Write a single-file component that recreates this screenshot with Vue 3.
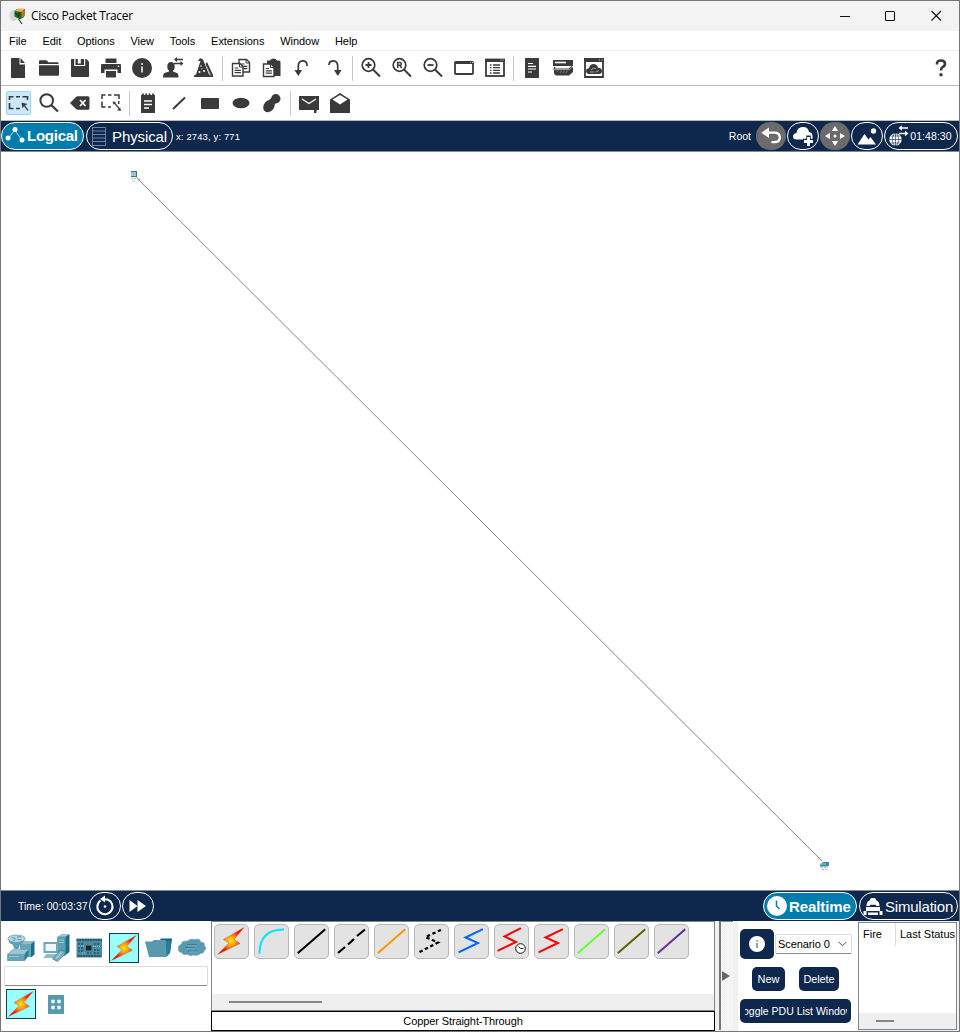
<script setup>
const D = '#3a3a3a'
const menus = ['File', 'Edit', 'Options', 'View', 'Tools', 'Extensions', 'Window', 'Help']

const magnifier = `<circle cx="8.5" cy="8" r="6.3" fill="none" stroke="${D}" stroke-width="1.7"/><path d="M13 12.5L20 19.5" stroke="${D}" stroke-width="2"/>`
const sheet = (x, y) => `<path d="M${x} ${y}h7.5l3 3v9.500h-10.500z" fill="#fff" stroke="${D}" stroke-width="1.4"/><path d="M${x + 7} ${y}v3.500h3.500" fill="none" stroke="${D}"/><path d="M${x + 2.2} ${y + 4.500}h3.500M${x + 2.2} ${y + 6.800}h6.200M${x + 2.2} ${y + 9.200}h6.200" stroke="${D}" stroke-width="1.200"/>`

const icons = {
  file: `<path d="M4 1h8.500v6.500H18V21H4z" fill="${D}"/><path d="M13.500 1L18 6h-4.500z" fill="${D}"/>`,
  folder: `<path d="M1 4q0-.8.8-.8h6.400q.8 0 1.200.8l.8 1.300h9.500q.8 0 .8.8v1H1z" fill="${D}"/><path d="M1 8.300h20v9.500q0 1-1 1H2q-1 0-1-1z" fill="${D}"/>`,
  save: `<path d="M2.500 2h2.700v7h11V2h1L20 4.800V19q0 1-1 1H3q-1 0-1-1V2.500z" fill="${D}"/><path d="M6.500 2h2.300v4.500h3V2h3.200v6H6.500z" fill="${D}"/>`,
  print: `<path d="M5.500 1.500h11V6h-11z" fill="${D}"/><path d="M1 8q0-1 1-1h18q1 0 1 1v8h-3.500v-3.500h-13V16H1z" fill="${D}"/><path d="M6 14h10v6.500H6z" fill="${D}"/><circle cx="18.500" cy="9.300" r=".8" fill="#fff"/>`,
  info: `<circle cx="11" cy="11" r="10" fill="${D}"/><path d="M11 9.500v6" stroke="#ddd" stroke-width="1.800"/><circle cx="11" cy="7" r="1.100" fill="#ddd"/>`,
  user: `<ellipse cx="9" cy="9.500" rx="3.700" ry="4.500" fill="${D}"/><path d="M7 12h4v2.500l4 1.500q1.500.7 1.500 4.500H1q0-3.800 1.500-4.500l4.500-1.500z" fill="${D}"/><path d="M13 2.500h8M12 6.500h7" stroke="${D}" stroke-width="1.500"/><path d="M15 0v5l-3-2.500zM18.500 4v5l3-2.500z" fill="${D}"/>`,
  wizard: `<path d="M7 1l3 1.500L16 17.500l2 1V20H1v-1.500l2-1L7.500 4 5 4z" fill="${D}"/><path d="M12.500 7l1.500-2L20 18v2h-2z" fill="${D}"/><g fill="#fff"><circle cx="8" cy="9" r=".8"/><circle cx="6.500" cy="15" r="1"/><circle cx="11" cy="14" r="1"/><circle cx="9" cy="11.800" r=".6"/></g><path d="M14 10l4 9" stroke="#aaa" stroke-width=".7"/>`,
  copy: sheet(9, 2.500) + sheet(2.500, 6.500),
  paste: `<path d="M6 3.500h3q1-2 3.500-2T16 3.500h2q1.500 0 1.500 1.500v14H6z" fill="${D}"/>${sheet(2.500, 7)}`,
  undo: `<path d="M6.300 15V9.500Q6.300 3.800 10.500 3.800T15 7.500v1.500" fill="none" stroke="${D}" stroke-width="1.700"/><path d="M2.500 13h7.600l-3.800 6z" fill="${D}"/>`,
  redo: `<path d="M14.700 15V9.500Q14.700 3.800 10.500 3.800T6 7.500v.500" fill="none" stroke="${D}" stroke-width="1.700"/><path d="M11 13h7.600l-3.800 6z" fill="${D}"/>`,
  zoomIn: `${magnifier}<path d="M8.500 5v6M5.500 8h6" stroke="${D}" stroke-width="1.800"/>`,
  zoomReset: `${magnifier}<path d="M6.700 11V5.500h2q1.700 0 1.700 1.400T8.700 8.300H6.700M8.800 8.300L10.700 11" fill="none" stroke="${D}" stroke-width="1.500"/>`,
  zoomOut: `${magnifier}<path d="M5.500 8h6" stroke="${D}" stroke-width="1.800"/>`,
  viewport: `<rect x="2" y="5" width="18" height="12" rx=".8" fill="#fff" stroke="${D}" stroke-width="1.800"/><path d="M2 5.800h18" stroke="${D}" stroke-width="2.400"/><path d="M17 5.500h1M19 5.500h1" stroke="#bbb" stroke-width="1"/>`,
  listwin: `<rect x="2" y="2.500" width="18" height="16.500" fill="#fff" stroke="${D}" stroke-width="1.800"/><path d="M1 3.500h20" stroke="${D}" stroke-width="3"/><path d="M6 8h1.500M9 8h7M6 10.700h1.500M9 10.700h7M6 13.400h1.500M9 13.400h7M6 16h1.500M9 16h7" stroke="${D}" stroke-width="1.300"/><path d="M16.500 3h1M18.500 3h1" stroke="#ccc" stroke-width="1"/>`,
  log: `<path d="M4 1h14v20H4z" fill="${D}"/><path d="M7 6.500h5M7 9.300h8M7 12h8M7 15h4" stroke="#fff" stroke-width="1.200"/>`,
  stack: `<path d="M1 3h20v6H1z" fill="${D}"/><path d="M3 5.500h11" stroke="#fff" stroke-width="1.600"/><path d="M3 10l-1 2h15l3-2.500" fill="none" stroke="${D}" stroke-width="1.200"/><path d="M2 13h15l4-3v5l-4 3.500H4.500Q2 18 2 16z" fill="${D}"/><path d="M5 15l1-1.500M8 16l1.500-2.500M11 16l1.500-2.500M14 16l1.500-2.500" stroke="#999" stroke-width=".7"/>`,
  cloudwin: `<path d="M2 2h18v18H2z" fill="#fff" stroke="${D}" stroke-width="1.800"/><path d="M1 1h20v4H1z" fill="${D}"/><path d="M16 3h1M18.500 3h1" stroke="#ccc"/><path d="M5.500 17Q3 16.500 3 14t3-2.800Q7 7 10.500 7t4.500 3.700q4 .3 4 3.300T16 17z" fill="${D}"/><path d="M8 13q2-3 5-1.500M7 15h4M12.500 15q2.500 0 3-2" fill="none" stroke="#aaa" stroke-width="1"/>`,
  select: `<path d="M2.500 8V4.700h4M9 4.700h4M15.500 4.700h5V8M2.500 11v5.500h4M9 16.500h4" fill="none" stroke="${D}" stroke-width="1.600"/><path d="M14.500 10.500l6 1.500-2.500 1.500 3.500 4.500-1 .8-3.500-4.500-1.500 2z" fill="${D}"/>`,
  find: `<circle cx="8.700" cy="8.500" r="6.300" fill="none" stroke="${D}" stroke-width="2"/><path d="M13.200 13L20 19.500" stroke="${D}" stroke-width="2.300"/>`,
  del: `<path d="M1 11l6-6q.7-.8 2-.8h10q1.500 0 1.500 1.500v10.500q0 1.500-1.500 1.500H9q-1.300 0-2-.8z" fill="${D}"/><path d="M11 8l5.500 6M16.500 8L11 14" stroke="#fff" stroke-width="1.800"/>`,
  resize: `<path d="M2 7V3h3.500M8 3h3.500M14 3h5v4M2 9.500v5.500h3.500M8 15h3M18.700 9v3" fill="none" stroke="${D}" stroke-width="1.500"/><path d="M14 10.500l6 7" stroke="${D}" stroke-width="1.200"/><path d="M12.500 9.500l3.500.5-2.500 2.500zM21 19l-4-.8 3.200-2.800z" fill="${D}"/>`,
  note: `<path d="M4 3h14v18H4z" fill="${D}"/><path d="M6 1.500v3M9.200 1.500v3M12.500 1.500v3M16 1.500v3" stroke="${D}" stroke-width="1.800"/><path d="M7 9h8M7 12.500h8M7 16h5" stroke="#fff" stroke-width="1.400"/>`,
  line: `<path d="M5 17L17 5.500" stroke="${D}" stroke-width="2"/>`,
  rect: `<rect x="2" y="6" width="18" height="11" rx="1" fill="${D}"/>`,
  ellipse: `<ellipse cx="11" cy="11" rx="8.500" ry="5.200" fill="${D}"/>`,
  blob: `<ellipse cx="8" cy="14" rx="5.200" ry="6.700" transform="rotate(38 8 14)" fill="${D}"/><circle cx="14.800" cy="6.700" r="4.700" fill="${D}"/><path d="M8 8l6 4 3-3-4-5z" fill="${D}"/>`,
  mail: `<path d="M1 4h20v14h-2.500v3h-2.500v-3H1z" fill="${D}"/><path d="M4 7l7 4.500L18 7" fill="none" stroke="#fff" stroke-width="1.300"/>`,
  openmail: `<path d="M1 7.500L11 1l10 6.500V21H1z" fill="${D}"/><path d="M11 3l7.500 4.500-7.500 5-7.500-5z" fill="#fff"/>`,
}
const rowOne = ['file', 'folder', 'save', 'print', 'info', 'user', 'wizard', '|', 'copy', 'paste', 'undo', 'redo', '|', 'zoomIn', 'zoomReset', 'zoomOut', 'viewport', 'listwin', '|', 'log', 'stack', 'cloudwin']
const rowTwo = ['select', 'find', 'del', 'resize', '|', 'note', 'line', 'rect', 'ellipse', 'blob', '|', 'mail', 'openmail']

const bolt = (id) => `<defs><radialGradient id="${id}" cx=".5" cy=".5" r=".55"><stop offset="0" stop-color="#ffe800"/><stop offset=".35" stop-color="#ff9a10"/><stop offset=".7" stop-color="#ff2008"/><stop offset="1" stop-color="#f00"/></radialGradient></defs><path d="M28 1.500L7.500 13.500l5.500 3.500L1.500 28.500 24 17.500l-6-4z" fill="url(#${id})" stroke="#b5521c" stroke-width=".4"/>`

const devices = {
  router: `<path d="M14 11l3-3h11.500v13.500l-3 2.500H14z" fill="#176f8c"/><path d="M14 11h11v13H14z" fill="#68a4b8"/><path d="M14 11l3-3h11.500l-3.500 3z" fill="#8fbccb"/><path d="M2.500 6.500q0 4 4 5L8.500 16h4l1.500-4.500q4-1 4-5z" fill="#5f9fb4"/><ellipse cx="10.500" cy="5.700" rx="8.700" ry="3.700" fill="#b4d3dc" stroke="#5b9eb4" stroke-width=".7"/><path d="M5.500 4.500l4 1M11 4l4-.5M7 8l2.500-1.500M11.500 6l4 1" stroke="#4f93a9" stroke-width=".9"/><path d="M1.500 21l5-4.500h16v6.500L18.500 28h-17z" fill="#2b7c97"/><path d="M1.500 21h17v7h-17z" fill="#68a4b8"/><path d="M1.500 21l5-4.500h16L18.500 21z" fill="#9bc5d2"/><path d="M3.500 23.500h9" stroke="#cfe3e9" stroke-dasharray="1 1"/>`,
  pc: `<path d="M17.500 4l4-2.500h8V19l-5 4h-7z" fill="#176f8c"/><path d="M17.500 3.800h8V23h-8z" fill="#5e9eb4"/><path d="M17.500 3.800l4-2.500h8l-4 2.500z" fill="#9bc5d2"/><path d="M19 7h5M19 9.500h5" stroke="#acd0da" stroke-width=".8"/><path d="M3.500 9h14v11h-14z" fill="#6ba6b9"/><path d="M5.500 11h10.500v7H5.500z" fill="#f0f6f7"/><path d="M3 25l3.500-4H17l-3 4z" fill="#8fbccb"/><path d="M12.500 26l8-9 4.500 1.500V21l-7.500 7.500z" fill="#77aec0" stroke="#2a7891" stroke-width=".6"/><path d="M16.500 25l5-5.500" stroke="#d8e9ee" stroke-width="1.400" stroke-dasharray="1 1"/>`,
  board: `<path d="M2.500 5.500h25.500v19H2.500z" fill="#4a8ba2"/><path d="M2.500 7h25.500M3.500 23h23" stroke="#1b4656" stroke-width="1.300" stroke-dasharray="2 .7"/><path d="M12 12.500h5.500v5H12z" fill="#20262a"/><path d="M4 11h5M20 11h6M4 15h5M4 18h6M20 17h6M20 20h5M13 20h4" stroke="#235566" stroke-width="1.500" stroke-dasharray="2 1"/><path d="M5 13h5M19 13.500h7M8 20h4" stroke="#b3d0d9" stroke-width=".9" stroke-dasharray="1 1"/>`,
  folder: `<path d="M17 7l1-1.500h11L27 20l-4 4z" fill="#0b6886"/><path d="M2 8.500h7l2-1.500h12l1 17H6z" fill="#5999b0"/><path d="M23 8l1 15 3-3.500 1.500-12z" fill="#2b7c97"/>`,
  cloud: `<path d="M4.500 11q0-3.500 6-3 3-3 7-1.500 6-1.500 6 2.500 5 0 4 4 3 2 0 4.500-1 3.500-4 3-3 3-7 1.500-3 1.500-6-.5-5 1-6-2-4-.5-3-4-1-3 3-4.500z" fill="#5999b0" stroke="#7eb0c1" stroke-width=".6"/><path d="M10 11.500h10M8 14.500h10M11 18h10" stroke="#347d97" stroke-width="1"/><path d="M11 12.700h9M9 15.700h9M12 19h9" stroke="#8fbccb" stroke-width=".7"/>`,
}
const categories = ['router', 'pc', 'board', 'bolt', 'folder', 'cloud']

const stroke = (d, c, extra = '') => `<path d="${d}" fill="none" stroke="${c}" stroke-width="2" stroke-linecap="square" ${extra}/>`
const zig = 'M5.500 28L24 19 11.500 13.500 28 5.500'
const cables = [
  `<g transform="translate(2 2)">${bolt('cable')}</g>`,
  stroke('M5.500 28.500Q6 6 29 5.500', '#00e5ff'),
  stroke('M4.500 28.500L30.500 6', '#000'),
  `<path d="M4 29L11 23M14 20.500L20 15M23 12L31 5.500" stroke="#000" stroke-width="2.200"/>`,
  stroke('M4.500 28.500L30.500 6', '#ff9800'),
  `<path d="M5.500 28L24 18.500 11.500 13 29 5" fill="none" stroke="#000" stroke-width="2.200" stroke-dasharray="3.500 2.500"/>`,
  stroke(zig, '#0066ff'),
  stroke('M4.500 26.500L22 18 10.500 12.500 26 4.500', '#f00') + `<circle cx="26.500" cy="24.500" r="4.800" fill="#fff" stroke="#111" stroke-width="1"/><path d="M24.500 22.500l2 2h3" fill="none" stroke="#111" stroke-width=".9"/>`,
  stroke(zig, '#f00'),
  stroke('M4.500 28.500L30.500 6', '#66ff33'),
  stroke('M4.500 28.500L30.500 6', '#666000'),
  stroke('M4.500 28.500L30.500 6', '#663399'),
]
</script>

<template>
  <div class="window">
    <header class="title">
      <svg class="app-icon" width="18" height="18" viewBox="0 0 18 18">
        <ellipse cx="5" cy="8.500" rx="4.500" ry="5.500" fill="#d0d8d6" />
        <path d="M5.500 4L8 2h8l-1 8-4 2.500-5.500-3z" fill="#1b6a25" />
        <path d="M6 4l3-2.500h7L13 5z" fill="#e8b15a" />
        <path d="M12.500 5L16 2v6.500l-3.500 2.500z" fill="#a87a2e" />
        <path d="M6 6l4 3.500M10 5.500v5" fill="none" stroke="#0c2d10" stroke-width=".9" />
        <path d="M9.500 12L13 17" stroke="#444" stroke-width="1.300" />
      </svg>
      <span class="name">Cisco Packet Tracer</span>
      <svg class="controls" width="104" height="12" viewBox="0 0 104 12" fill="none" stroke="#111" stroke-width="1.100">
        <path d="M0 6.500h10M91.500 1l9.500 9.500M101 1l-9.500 9.500" /><rect x="45.500" y="1.500" width="9" height="9" rx="1" />
      </svg>
    </header>

    <nav class="menu"><span v-for="m in menus" :key="m">{{ m }}</span></nav>

    <div class="toolbar">
      <template v-for="(n, i) in rowOne" :key="i">
        <i v-if="n === '|'" class="sep"></i>
        <span v-else class="tool"><svg width="22" height="22" viewBox="0 0 22 22" v-html="icons[n]" /></span>
      </template>
      <svg class="help" width="12" height="20" viewBox="0 0 12 20"><path d="M2 6.500V5.500Q2 2.500 6 2.500t4 3.300Q10 8 7.500 9.200 6 10 6 12.500" fill="none" stroke="#3a3a3a" stroke-width="2.600" /><circle cx="6" cy="16.800" r="1.700" fill="#3a3a3a" /></svg>
    </div>
    <div class="toolbar">
      <template v-for="(n, i) in rowTwo" :key="i">
        <i v-if="n === '|'" class="sep"></i>
        <span v-else class="tool" :class="{ active: n === 'select' }"><svg width="22" height="22" viewBox="0 0 22 22" v-html="icons[n]" /></span>
      </template>
    </div>

    <div class="bar top">
      <button class="pill on logical">
        <svg width="21" height="20" viewBox="0 0 21 20"><path d="M3.500 13.500L9.500 5l7 9.500" fill="none" stroke="#d5eaf3" stroke-width=".8" /><g fill="#fff"><circle cx="3" cy="13" r="2.500" /><circle cx="10" cy="4.500" r="2.500" /><circle cx="17" cy="15" r="2.500" /></g></svg>
        <b>Logical</b>
      </button>
      <button class="pill physical">
        <svg width="14" height="19" viewBox="0 0 14 19"><path d="M.5.5h13v18H.5zM.5 4h13M.5 7.500h13M.5 11h13M.5 14.500h13" fill="none" stroke="#71829f" stroke-width="1" /></svg>
        <span>Physical</span>
      </button>
      <span class="coords">x: 2743, y: 771</span>
      <span class="root">Root</span>
      <span class="round grey">
        <svg width="22" height="20" viewBox="0 0 22 20"><path d="M8 6.700h6q5.800 0 5.800 4.700t-5.800 4.700h-2.500" fill="none" stroke="#fff" stroke-width="2.300" /><path d="M9 1.500v10.400L1.300 6.700z" fill="#fff" /></svg>
      </span>
      <span class="round wide">
        <svg width="22" height="22" viewBox="0 0 22 22"><path d="M4.500 14.500Q1 14.500 1 11.500t3.500-3.500Q5 2.500 10.500 2t6.500 5q3.500.5 3.500 4v3.500z" fill="#fff" /><path d="M16.500 10.500v11M11 16h11" stroke="#0d274d" stroke-width="4.500" /><path d="M16.500 12v9M12 16.500h9" stroke="#fff" stroke-width="2.800" /></svg>
      </span>
      <span class="round grey">
        <svg width="20" height="20" viewBox="0 0 20 20" fill="#fff"><path d="M10 0l3.200 5H6.800zM10 20l3.200-5H6.800zM0 10l5-3v6zM20 10l-5-3v6z" /><circle cx="10" cy="10" r="1.500" /></svg>
      </span>
      <span class="round wide">
        <svg width="20" height="18" viewBox="0 0 20 18" fill="#fff"><path d="M.5 17.500L7.500 7l4 5.500 2-2.500 5.500 7.500z" /><circle cx="16.500" cy="4" r="2.700" /></svg>
      </span>
      <span class="round clock">
        <svg width="21" height="22" viewBox="0 0 21 22"><circle cx="7.500" cy="14.500" r="6.200" fill="#fff" /><path d="M1 14.500h13M2.500 11h10M2.500 18h10M7.500 8v13" stroke="#0d274d" stroke-width=".6" /><ellipse cx="7.500" cy="14.500" rx="3" ry="6.200" fill="none" stroke="#0d274d" stroke-width=".6" /><path d="M13 3h7M11 8.500h7" stroke="#fff" stroke-width="1.500" /><path d="M14 .3v5.400L10.500 3zM17 5.800v5.400L20.500 8.500z" fill="#fff" /></svg>
        <span>01:48:30</span>
      </span>
    </div>

    <main class="workspace">
      <svg width="958" height="738" viewBox="1 152 958 738">
        <path d="M136.500 177.500L822 861" stroke="#858585" stroke-width="1" />
        <path d="M131 171h6v6h-6z" fill="#2b7c97" /><path d="M131 172h5v4h-5z" fill="#9cc8d9" /><path d="M131 178.500h2m1 0h2M132 181h3" stroke="#a9cabb" /><path d="M138 178.500h2v2h-2z" fill="#91bc7c" />
        <path d="M818.500 857.500h2v2h-2z" fill="#91bc7c" /><path d="M820 864.500l3-2.500h6v3.500l-2 1h-7z" fill="#3a89a3" /><path d="M820 864h6" stroke="#b4d5df" /><path d="M821 867.500h7M822 869.500h5" stroke="#b5b5c4" stroke-dasharray="2 1" />
      </svg>
    </main>

    <div class="bar bottom">
      <span class="time">Time: 00:03:37</span>
      <span class="round wide"><svg width="22" height="22" viewBox="0 0 22 22"><path d="M6.500 5.500A7.600 7.600 0 1 0 13.500 4.500L9 4.300" fill="none" stroke="#fff" stroke-width="2" /><path d="M11 .5v7L6 4z" fill="#fff" /><circle cx="11" cy="11.500" r="1.300" fill="#fff" /></svg></span>
      <span class="round wide"><svg width="20" height="14" viewBox="0 0 20 14"><path d="M1.500 1l8 6-8 6zM9.500 1l8.500 6-8.500 6z" fill="#fff" /></svg></span>
      <button class="pill on realtime">
        <svg width="20" height="20" viewBox="0 0 20 20"><circle cx="10" cy="10" r="10" fill="#fff" /><path d="M9.500 4.500v5.500l3 3" fill="none" stroke="#007cad" stroke-width="1.500" /></svg>
        <b>Realtime</b>
      </button>
      <button class="pill simulation">
        <svg width="20" height="19" viewBox="0 0 20 19" fill="#fff"><path d="M3.500 9q0-4.500 3-5.500l1.500-2.500h4l1.500 2.500q3 1 3 5.500z" /><path d="M3 10h14v4H3z" /><path d="M7 8.500h6" stroke="#0d274d" stroke-width="1.400" /><path d="M.5 14h3v4h-3zM5 15.500h10V18H5zM16.500 14h3v4h-3z" /></svg>
        <span>Simulation</span>
      </button>
    </div>

    <footer class="panel">
      <section class="palette">
        <div class="cats">
          <span v-for="c in categories" :key="c" class="cat" :class="{ picked: c === 'bolt' }">
            <svg v-if="c === 'bolt'" width="28" height="28" viewBox="0 0 30 30" v-html="bolt('main')" />
            <svg v-else width="30" height="30" viewBox="0 0 30 30" v-html="devices[c]" />
          </span>
        </div>
        <div class="search"></div>
        <div class="subs">
          <span class="cat picked"><svg width="28" height="28" viewBox="0 0 30 30" v-html="bolt('sub')" /></span>
          <svg width="16" height="19" viewBox="0 0 16 19"><path d="M0 0h16v19H0z" fill="#5999b0" /><path d="M3.500 5h3v3h-3zM9.500 5h3v3h-3zM3.500 11h3v3h-3zM9.500 11h3v3h-3z" fill="#fff" stroke="#c8dfe6" stroke-width=".8" /></svg>
        </div>
      </section>

      <section class="links">
        <div class="tray">
          <div class="cables"><span v-for="(c, i) in cables" :key="i" class="cable"><svg width="35" height="35" viewBox="0 0 35 35" v-html="c" /></span></div>
          <div class="scroll"><i></i></div>
        </div>
        <div class="caption"><span>Copper Straight-Through</span></div>
      </section>

      <div class="splitter"><i></i></div>

      <section class="scenario">
        <div class="line">
          <span class="btn big"><svg width="16" height="16" viewBox="0 0 16 16"><circle cx="8" cy="8" r="8" fill="#fff" /><path d="M8 7v5" stroke="#6d7a91" stroke-width="1.400" /><circle cx="8" cy="4.800" r=".9" fill="#6d7a91" /></svg></span>
          <span class="select">Scenario 0<svg width="9" height="6" viewBox="0 0 9 6"><path d="M.5.800l4 4 4-4" fill="none" stroke="#555" /></svg></span>
        </div>
        <div class="pair"><span class="btn new">New</span><span class="btn delete">Delete</span></div>
        <span class="btn toggle"><span>Toggle PDU List Window</span></span>
      </section>

      <section class="table">
        <div class="head"><span class="fire">Fire</span><span class="status">Last Status</span></div>
        <div class="scroll"><i></i></div>
      </section>
    </footer>
  </div>
</template>

<style>
body { margin: 0; background: #fff; overflow: hidden; }
</style>

<style scoped>
* { box-sizing: border-box; }
svg { display: block; flex: none; }
.window { width: 960px; height: 1032px; border: 1px solid #767676; background: #fff; display: flex; flex-direction: column; font: 11px "Liberation Sans", Arial, sans-serif; color: #000; white-space: nowrap; overflow: hidden; }
.title { height: 30px; flex: none; background: #f3f3f3; display: flex; align-items: center; padding-left: 8px; }
.app-icon { margin-top: -1px; }
.name { font: 12px "Open Sans", "Noto Sans", sans-serif; margin-left: 4px; letter-spacing: -.33px; margin-top: -1px; }
.controls { margin-left: auto; margin-right: 15px; margin-top: -1px; }
.menu { height: 20px; flex: none; display: flex; align-items: center; gap: 15.900px; padding-left: 8px; border-bottom: 1px solid #eee; letter-spacing: -.055px; }
.toolbar { height: 35px; flex: none; display: flex; align-items: center; padding-left: 1.5px; border-bottom: 1px solid #bababa; }
.tool { width: 31px; height: 34px; flex: none; display: flex; align-items: center; justify-content: center; }
.active { width: 25px; height: 24px; margin: 0 3px; background: #cce8ff; border: 1px solid #99d1ff; border-radius: 2px; }
.sep { width: 1px; height: 25px; margin: 0 2.500px; background: #c8c8c8; flex: none; }
.help { margin-left: auto; margin-right: 12px; }
.bar { height: 30px; flex: none; background: #0d274d; color: #fff; display: flex; align-items: center; }
.top { height: 31px; border-bottom: 1px solid #808a9b; padding-right: 1px; }
.pill { height: 28px; padding: 0; border: 1px solid #fff; border-radius: 14px; background: transparent; color: #fff; display: flex; align-items: center; font: 15px "Liberation Sans", Arial, sans-serif; flex: none; }
.on { background: #007cad; }
.logical { width: 83px; padding-left: 3px; }
.logical b { margin-left: 1px; margin-top: -1px; letter-spacing: -.25px; }
.logical svg { margin-top: -2px; }
.physical { width: 87px; margin-left: 2px; padding-left: 5px; }
.physical span { margin-left: 6px; letter-spacing: -.1px; }
.coords { margin-left: 3px; font-size: 9.500px; letter-spacing: .12px; }
.root { margin-left: auto; margin-right: 4px; font-size: 10.500px; }
.round { width: 32px; height: 28px; border-radius: 14px; display: flex; align-items: center; justify-content: center; flex: none; }
.wide { border: 1px solid #fff; }
.grey { background: #6b6b6b; width: 30px; margin: 0 1px; }
.clock { border: 1px solid #fff; width: 74px; margin-left: 1px; font-size: 10.500px; gap: 1px; letter-spacing: .06px; padding-right: 2px; }
.workspace { height: 739px; flex: none; border-bottom: 1px solid #808a9b; }
.time { width: 88px; padding-left: 17px; font-size: 10.500px; }
.bottom .wide { margin-right: 1px; }
.realtime { width: 94px; margin-left: auto; padding-left: 3px; }
.realtime b { margin-left: 2px; letter-spacing: -.1px; }
.simulation { width: 99px; margin-left: 2px; margin-right: 1px; padding-left: 3px; }
.simulation span { margin-left: 2px; letter-spacing: -.2px; }
.panel { height: 110px; display: flex; flex: none; background: #f0f0f0; }
.palette { width: 210px; background: #fff; padding: 12px 3px 0; flex: none; }
.cats { display: flex; gap: 4.200px; padding-left: 2px; }
.cat { width: 30px; height: 30px; display: flex; align-items: center; justify-content: center; flex: none; }
.picked { background: #9ff; border: 1px solid #123f4c; }
.search { height: 20px; margin: 3px 0; border: 1px solid #ddd; border-bottom-color: #888; border-radius: 2px; }
.subs { display: flex; align-items: center; gap: 12px; padding-left: 2px; }
.links { width: 504px; flex: none; }
.tray { height: 90px; background: #fff; border: 1px solid #7f858e; display: flex; flex-direction: column; }
.cables { display: flex; gap: 5px; padding: 2px 2px; flex: 1; }
.cable { width: 35px; height: 35px; background: #e3e3e3; border: 1px solid #b9b9b9; border-radius: 5px; display: flex; align-items: center; justify-content: center; }
.scroll { background: #efefef; height: 16px; flex: none; padding-top: 7px; }
.scroll i { display: block; width: 93px; height: 2px; margin-left: 17px; background: #858585; }
.caption { height: 20px; border: 1px solid #000; background: #fff; display: flex; align-items: center; justify-content: center; letter-spacing: -.1px; }
.splitter { width: 14px; height: 109px; margin-left: 4px; border-left: 2px solid #777; border-top: 1px solid #888; background: repeating-conic-gradient(#fff 0 25%, #ececec 0 50%) 0 0 / 2px 2px; display: flex; align-items: center; flex: none; }
.splitter i { border-left: 8px solid #666; border-top: 5px solid transparent; border-bottom: 5px solid transparent; margin-left: 1px; }
.scenario { width: 120px; margin-left: 5px; padding: 8px 0 0 2px; background: #fff; flex: none; }
.line { display: flex; align-items: center; gap: 1px; }
.btn { display: flex; align-items: center; justify-content: center; height: 24px; border-radius: 5px; background: #0d274d; color: #fff; }
.big { width: 34px; height: 30px; }
.select { width: 77px; height: 20px; border: 1px solid #ddd; border-bottom-color: #888; border-radius: 2px; display: flex; align-items: center; justify-content: space-between; padding: 0 4px 0 2px; letter-spacing: -.08px; }
.pair { display: flex; gap: 14px; margin: 8px 0 8px 12px; }
.new { width: 33px; }
.delete { width: 40px; letter-spacing: -.1px; }
.toggle { width: 111px; overflow: hidden; padding: 0 4px; }
.toggle span { width: 102px; overflow: hidden; display: flex; justify-content: center; font-size: 10.500px; }
.table { width: 99px; height: 108px; margin-top: 1px; border: 1px solid #7f858e; background: #fff; display: flex; flex-direction: column; justify-content: space-between; flex: none; }
.head { display: flex; height: 23px; }
.head span { line-height: 23px; }
.fire { width: 37px; padding-left: 4px; border-right: 1px solid #ddd; }
.status { padding-left: 4px; }
.table .scroll i { width: 18px; }
</style>
